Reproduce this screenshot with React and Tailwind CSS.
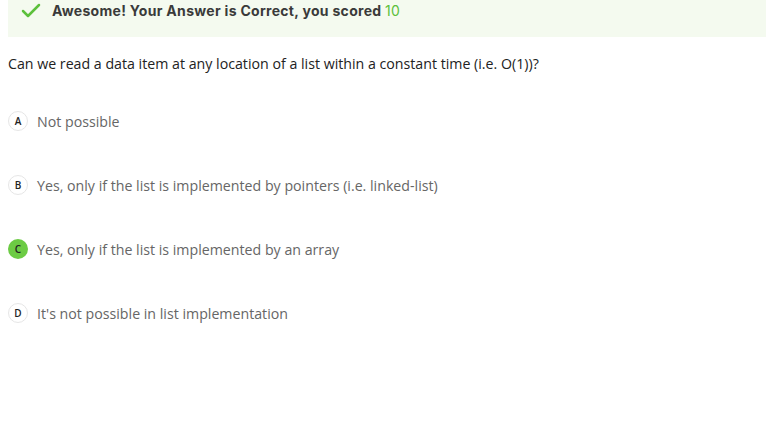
import { Check } from 'lucide-react';

const options = [
  { key: 'A', text: 'Not possible' },
  { key: 'B', text: 'Yes, only if the list is implemented by pointers (i.e. linked-list)' },
  { key: 'C', text: 'Yes, only if the list is implemented by an array', correct: true },
  { key: 'D', text: "It's not possible in list implementation" },
];

export default function App() {
  return (
    <div className="w-[766px] h-[444px] bg-white font-['Open_Sans',sans-serif]">
      {/* Result banner */}
      <div className="ml-2 h-[37px] bg-[#f4faef] flex items-start pl-[11px]">
        <Check className="w-[24px] h-[24px] text-[#5cc03c] -mt-[1px]" strokeWidth={2.5} />
        <p className="ml-[9px] mt-0 text-[14px] font-bold text-[#3a3a3a] font-['Inter',sans-serif] tracking-[0.3px]">
          Awesome! Your Answer is Correct, you scored <span className="font-normal text-[#5cc03c]">10</span>
        </p>
      </div>

      <p className="mt-[16px] ml-2 text-[14.2px] text-[#222]">
        Can we read a data item at any location of a list within a constant time (i.e. O(1))?
      </p>

      <div className="mt-[37px] ml-2 flex flex-col gap-[44px]">
        {options.map(o => (
          <div key={o.key} className="flex items-center h-[20px]">
            <span
              className={
                o.correct
                  ? 'w-[20px] h-[20px] rounded-full bg-[#6ccb44] flex items-center justify-center text-[10px] font-semibold text-[#222]'
                  : 'w-[20px] h-[20px] rounded-full border border-[#e6e6e6] bg-white flex items-center justify-center text-[10px] font-semibold text-[#222]'
              }
            >
              {o.key}
            </span>
            <span className="ml-[9px] text-[14.2px] text-[#666]">{o.text}</span>
          </div>
        ))}
      </div>
    </div>
  );
}
